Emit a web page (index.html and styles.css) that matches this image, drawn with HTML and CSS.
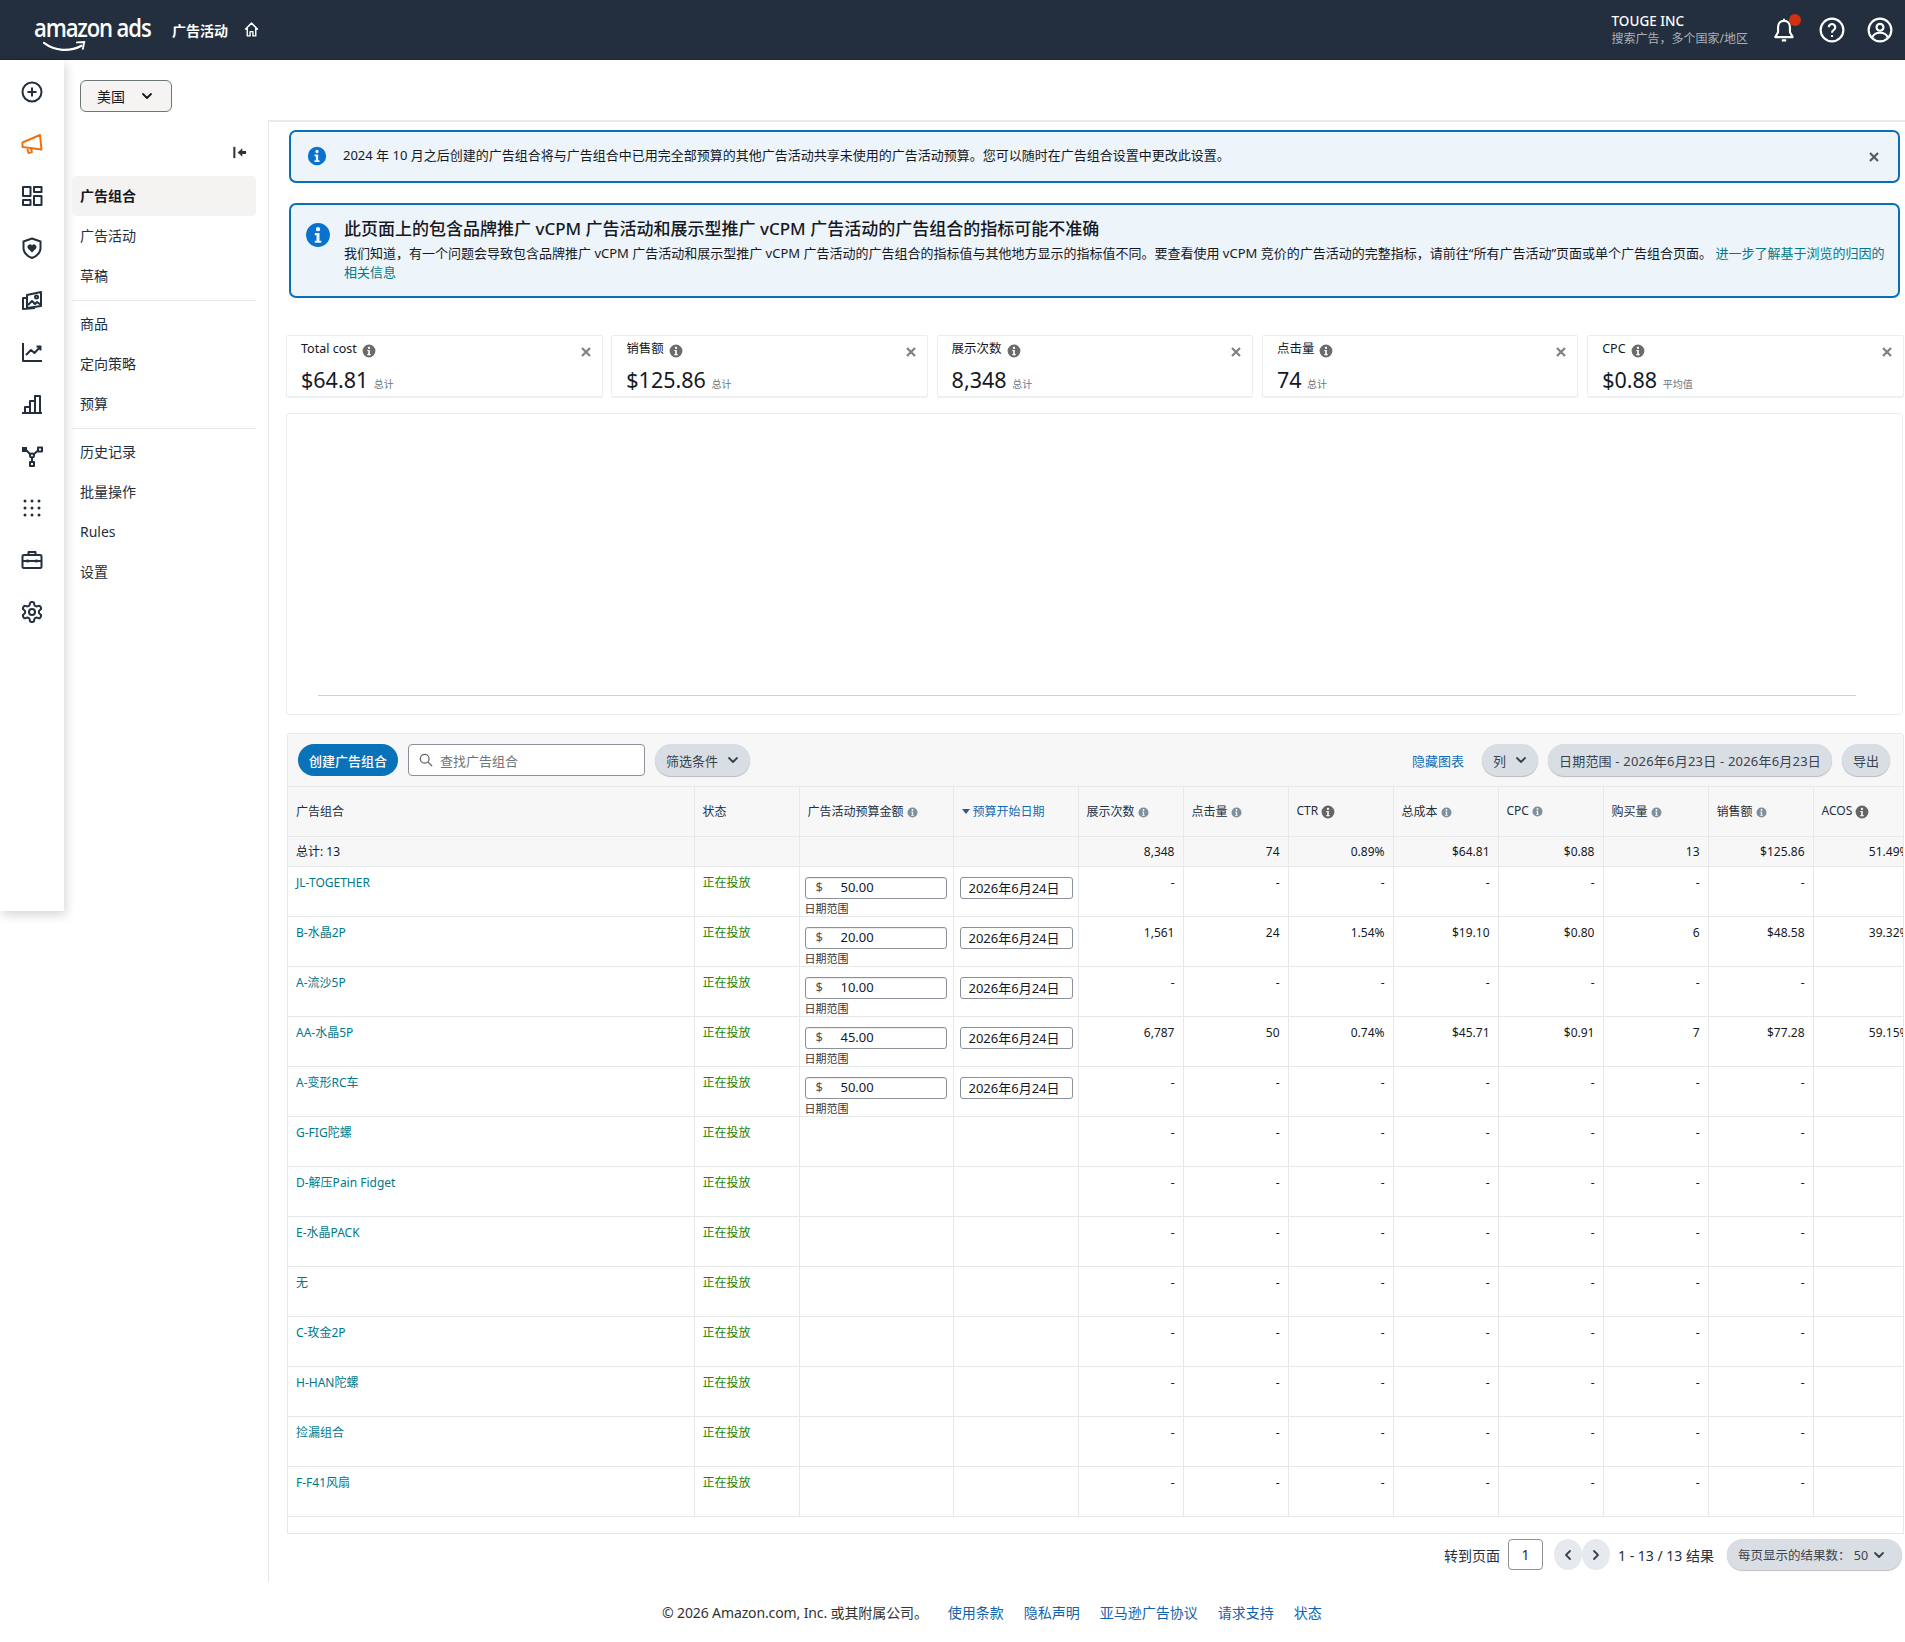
FILE: index.html
```html
<!DOCTYPE html>
<html lang="zh-CN">
<head>
  <meta charset="UTF-8">
  <meta name="viewport" content="width=device-width, initial-scale=1.0">
  <title>广告活动 - amazon ads</title>
  <link rel="stylesheet" href="styles.css">
</head>
<body>
  <!-- shared icons -->
  <svg class="defs" width="0" height="0">
    <symbol id="info" viewBox="0 0 24 24">
      <path fill-rule="evenodd" fill="currentColor" d="M12 1a11 11 0 1 1 0 22 11 11 0 0 1 0-22zm0 3.6a2 2 0 1 0 0 4 2 2 0 0 0 0-4zM9 10.2v2h1.6v5H9v2h6v-2h-1.6v-7z"/>
    </symbol>
    <symbol id="chev" viewBox="0 0 12 12">
      <path d="M2 4l4 4 4-4" fill="none" stroke="currentColor" stroke-width="1.8" stroke-linecap="round" stroke-linejoin="round"/>
    </symbol>
    <symbol id="cross" viewBox="0 0 12 12">
      <path d="M2 2l8 8M10 2l-8 8" fill="none" stroke="currentColor" stroke-width="2.2"/>
    </symbol>
  </svg>

  <header class="topbar">
    <div class="logo">
      <span class="logo-text">amazon ads</span>
      <svg class="logo-smile" viewBox="0 0 48 14" width="44" height="13">
        <path d="M1 2c12 9 28 10 41 3" fill="none" stroke="#fff" stroke-width="2.4" stroke-linecap="round"/>
        <path d="M37 1.500l8-.5-1.500 7.500" fill="none" stroke="#fff" stroke-width="2" stroke-linecap="round"/>
      </svg>
    </div>
    <span class="topbar-title">广告活动</span>
    <svg class="topbar-home" viewBox="0 0 24 24" width="17" height="17"><path d="M3 12l9-9 9 9M6 10v11h4v-6h4v6h4V10" fill="none" stroke="#fff" stroke-width="2" stroke-linejoin="round"/></svg>
    <div class="account">
      <div class="account-name">TOUGE INC</div>
      <div class="account-sub">搜索广告，多个国家/地区</div>
    </div>
    <div class="bell">
      <svg viewBox="0 0 24 24" width="26" height="26"><path d="M12 3.500c-3.600 0-5.500 2.700-5.500 6v4.500L4 18.500h16L17.500 14V9.500c0-3.300-1.900-6-5.500-6zM12 1.500v2M10 21.500h4" fill="none" stroke="#fff" stroke-width="2" stroke-linejoin="round"/></svg>
      <span class="bell-dot"></span>
    </div>
    <svg class="top-icon" viewBox="0 0 24 24" width="26" height="26"><circle cx="12" cy="12" r="10.500" fill="none" stroke="#fff" stroke-width="2"/><path d="M9 9.500a3 3 0 1 1 4.500 2.600c-1 .6-1.500 1.100-1.500 2.400M12 16.600v1.800" fill="none" stroke="#fff" stroke-width="2"/></svg>
    <svg class="top-icon" viewBox="0 0 24 24" width="26" height="26"><circle cx="12" cy="12" r="10.500" fill="none" stroke="#fff" stroke-width="2"/><circle cx="12" cy="9.500" r="3.200" fill="none" stroke="#fff" stroke-width="2"/><path d="M4.800 19c1-3 3.700-4.500 7.200-4.500s6.200 1.500 7.200 4.500" fill="none" stroke="#fff" stroke-width="2"/></svg>
  </header>

  <div class="layout">
    <!-- icon rail -->
    <aside class="rail">
      <svg viewBox="0 0 24 24"><circle cx="12" cy="12" r="9.500"/><path d="M12 7.500v9M7.500 12h9"/></svg>
      <svg class="rail-active" viewBox="0 0 24 24"><path d="M2.500 10.500L20 3l1.500 14.500-19-2.500zM7 15.500l1.500 5.500 3.500-1-1.500-4"/></svg>
      <svg viewBox="0 0 24 24"><rect x="3" y="3" width="7.500" height="9"/><rect x="14" y="3" width="7.500" height="5"/><rect x="3" y="16" width="7.500" height="5"/><rect x="14" y="12" width="7.500" height="9"/></svg>
      <svg viewBox="0 0 24 24"><path d="M12 2.500l8.500 3v6.500c0 5-3.500 8-8.500 10-5-2-8.500-5-8.500-10V5.500z"/><path class="solid" d="M12 16.500l-4-4a2.500 2.500 0 0 1 4-3 2.500 2.500 0 0 1 4 3z"/></svg>
      <svg viewBox="0 0 24 24"><path d="M7 7l14-3v14l-14 2zM7 10H3v11l12-1"/><circle cx="16.500" cy="9" r="1.500"/><path d="M8 17l4-4 3 3 2-2 4 3"/></svg>
      <svg viewBox="0 0 24 24"><path d="M3 3v18h19M6 15l5-5 3.500 3 6-6.500M16.500 6.500h4v4"/></svg>
      <svg viewBox="0 0 24 24"><path d="M2 21h20M5 21v-6h5v6M10 21V9h5v12M15 21V4h5v17"/></svg>
      <svg viewBox="0 0 24 24"><rect class="solid" x="2" y="3" width="5" height="5"/><rect x="18" y="3.500" width="4" height="4"/><rect x="10" y="18" width="4" height="4"/><circle cx="12" cy="11.500" r="2"/><path d="M6.500 6.500l4 4M18 6.500l-4.500 4M12 13.500V18"/></svg>
      <svg class="rail-dots" viewBox="0 0 24 24"><circle cx="5" cy="5" r="1.500"/><circle cx="12" cy="5" r="1.500"/><circle cx="19" cy="5" r="1.500"/><circle cx="5" cy="12" r="1.500"/><circle cx="12" cy="12" r="1.500"/><circle cx="19" cy="12" r="1.500"/><circle cx="5" cy="19" r="1.500"/><circle cx="12" cy="19" r="1.500"/><circle cx="19" cy="19" r="1.500"/></svg>
      <svg viewBox="0 0 24 24"><rect x="2.500" y="7" width="19" height="13" rx="1.500"/><path d="M8.500 7V4h7v3M2.500 13h19M7.500 11.500v3M16.500 11.500v3"/></svg>
      <svg viewBox="0 0 24 24"><path d="M12.220 2h-.44a2 2 0 0 0-2 2v.18a2 2 0 0 1-1 1.730l-.43.250a2 2 0 0 1-2 0l-.15-.08a2 2 0 0 0-2.730.730l-.22.380a2 2 0 0 0 .730 2.730l.15.100a2 2 0 0 1 1 1.720v.510a2 2 0 0 1-1 1.740l-.15.090a2 2 0 0 0-.730 2.730l.22.380a2 2 0 0 0 2.730.730l.15-.08a2 2 0 0 1 2 0l.43.250a2 2 0 0 1 1 1.730V20a2 2 0 0 0 2 2h.44a2 2 0 0 0 2-2v-.18a2 2 0 0 1 1-1.730l.43-.25a2 2 0 0 1 2 0l.15.08a2 2 0 0 0 2.730-.730l.22-.39a2 2 0 0 0-.730-2.730l-.15-.08a2 2 0 0 1-1-1.740v-.5a2 2 0 0 1 1-1.740l.15-.09a2 2 0 0 0 .730-2.730l-.22-.38a2 2 0 0 0-2.730-.730l-.15.08a2 2 0 0 1-2 0l-.43-.25a2 2 0 0 1-1-1.730V4a2 2 0 0 0-2-2z"/><circle cx="12" cy="12" r="3"/></svg>
    </aside>

    <div class="workspace">
      <div class="country-bar">
        <button class="country">美国 <svg width="12" height="12"><use href="#chev"/></svg></button>
      </div>

      <div class="work-body">
        <nav class="sidenav">
          <div class="collapse">
            <svg viewBox="0 0 16 16" width="15" height="15"><path d="M2.500 2v12" stroke="#333" stroke-width="2.200"/><path d="M6 8l5-4.500v3h4v3h-4v3z" fill="#333"/></svg>
          </div>
          <a class="nav-item nav-active" href="#">广告组合</a>
          <a class="nav-item" href="#">广告活动</a>
          <a class="nav-item" href="#">草稿</a>
          <div class="nav-line"></div>
          <a class="nav-item" href="#">商品</a>
          <a class="nav-item" href="#">定向策略</a>
          <a class="nav-item" href="#">预算</a>
          <div class="nav-line"></div>
          <a class="nav-item" href="#">历史记录</a>
          <a class="nav-item" href="#">批量操作</a>
          <a class="nav-item" href="#">Rules</a>
          <a class="nav-item" href="#">设置</a>
        </nav>

        <main class="content">
          <div class="alert alert-small">
            <svg class="alert-icon" width="20" height="20"><use href="#info"/></svg>
            <p>2024 年 10 月之后创建的广告组合将与广告组合中已用完全部预算的其他广告活动共享未使用的广告活动预算。您可以随时在广告组合设置中更改此设置。</p>
            <svg class="alert-close" width="12" height="12"><use href="#cross"/></svg>
          </div>
          <div class="alert alert-big">
            <svg class="alert-icon" width="26" height="26"><use href="#info"/></svg>
            <div>
              <h2>此页面上的包含品牌推广 vCPM 广告活动和展示型推广 vCPM 广告活动的广告组合的指标可能不准确</h2>
              <p>我们知道，有一个问题会导致包含品牌推广 vCPM 广告活动和展示型推广 vCPM 广告活动的广告组合的指标值与其他地方显示的指标值不同。要查看使用 vCPM 竞价的广告活动的完整指标，请前往“所有广告活动”页面或单个广告组合页面。 <a href="#">进一步了解基于浏览的归因的相关信息</a></p>
            </div>
          </div>

          <div class="metrics">
            <div class="metric">
              <div class="metric-label">Total cost <svg width="14" height="14"><use href="#info"/></svg></div>
              <div class="metric-value">$64.81 <small>总计</small></div>
              <svg class="metric-close" width="12" height="12"><use href="#cross"/></svg>
            </div>
            <div class="metric">
              <div class="metric-label">销售额 <svg width="14" height="14"><use href="#info"/></svg></div>
              <div class="metric-value">$125.86 <small>总计</small></div>
              <svg class="metric-close" width="12" height="12"><use href="#cross"/></svg>
            </div>
            <div class="metric">
              <div class="metric-label">展示次数 <svg width="14" height="14"><use href="#info"/></svg></div>
              <div class="metric-value">8,348 <small>总计</small></div>
              <svg class="metric-close" width="12" height="12"><use href="#cross"/></svg>
            </div>
            <div class="metric">
              <div class="metric-label">点击量 <svg width="14" height="14"><use href="#info"/></svg></div>
              <div class="metric-value">74 <small>总计</small></div>
              <svg class="metric-close" width="12" height="12"><use href="#cross"/></svg>
            </div>
            <div class="metric">
              <div class="metric-label">CPC <svg width="14" height="14"><use href="#info"/></svg></div>
              <div class="metric-value">$0.88 <small>平均值</small></div>
              <svg class="metric-close" width="12" height="12"><use href="#cross"/></svg>
            </div>
          </div>

          <div class="chart"><div class="chart-axis"></div></div>

          <section class="panel">
            <div class="toolbar">
              <button class="btn-primary">创建广告组合</button>
              <div class="search">
                <svg viewBox="0 0 16 16" width="14" height="14"><circle cx="6.500" cy="6.500" r="5" fill="none" stroke="#666" stroke-width="1.500"/><path d="M10.500 10.500l4.500 4.500" stroke="#666" stroke-width="1.500"/></svg>
                <span>查找广告组合</span>
              </div>
              <button class="btn-gray">筛选条件 <svg width="12" height="12"><use href="#chev"/></svg></button>
              <a class="hide-chart" href="#">隐藏图表</a>
              <button class="btn-gray">列 <svg width="12" height="12"><use href="#chev"/></svg></button>
              <button class="btn-gray btn-range">日期范围 - 2026年6月23日 - 2026年6月23日</button>
              <button class="btn-gray">导出</button>
            </div>

            <div class="table-clip">
              <table class="grid">
                <colgroup>
                  <col class="c-name"><col class="c-status"><col class="c-budget"><col class="c-date">
                  <col class="c-num"><col class="c-num"><col class="c-num"><col class="c-num">
                  <col class="c-num"><col class="c-num"><col class="c-num"><col class="c-num">
                </colgroup>
                <thead>
                  <tr>
                    <th>广告组合</th>
                    <th>状态</th>
                    <th>广告活动预算金额 <svg class="i-soft" width="11" height="11"><use href="#info"/></svg></th>
                    <th class="sorted"><span class="sort-mark"></span>预算开始日期</th>
                    <th>展示次数 <svg class="i-soft" width="11" height="11"><use href="#info"/></svg></th>
                    <th>点击量 <svg class="i-soft" width="11" height="11"><use href="#info"/></svg></th>
                    <th>CTR <svg class="i-hard" width="14" height="14"><use href="#info"/></svg></th>
                    <th>总成本 <svg class="i-soft" width="11" height="11"><use href="#info"/></svg></th>
                    <th>CPC <svg class="i-soft" width="11" height="11"><use href="#info"/></svg></th>
                    <th>购买量 <svg class="i-soft" width="11" height="11"><use href="#info"/></svg></th>
                    <th>销售额 <svg class="i-soft" width="11" height="11"><use href="#info"/></svg></th>
                    <th>ACOS <svg class="i-hard" width="14" height="14"><use href="#info"/></svg></th>
                  </tr>
                </thead>
                <tbody>
                  <tr class="total">
                    <td>总计: 13</td><td></td><td></td><td></td>
                    <td>8,348</td><td>74</td><td>0.89%</td><td>$64.81</td><td>$0.88</td><td>13</td><td>$125.86</td><td>51.49%</td>
                  </tr>
                  <tr>
                    <td><a href="#">JL-TOGETHER</a></td><td class="live">正在投放</td>
                    <td class="cell-budget"><div class="money"><span>$</span>50.00</div><div class="range-label">日期范围</div></td>
                    <td class="cell-date"><div class="date-box">2026年6月24日</div></td>
                    <td>-</td><td>-</td><td>-</td><td>-</td><td>-</td><td>-</td><td>-</td><td></td>
                  </tr>
                  <tr>
                    <td><a href="#">B-水晶2P</a></td><td class="live">正在投放</td>
                    <td class="cell-budget"><div class="money"><span>$</span>20.00</div><div class="range-label">日期范围</div></td>
                    <td class="cell-date"><div class="date-box">2026年6月24日</div></td>
                    <td>1,561</td><td>24</td><td>1.54%</td><td>$19.10</td><td>$0.80</td><td>6</td><td>$48.58</td><td>39.32%</td>
                  </tr>
                  <tr>
                    <td><a href="#">A-流沙5P</a></td><td class="live">正在投放</td>
                    <td class="cell-budget"><div class="money"><span>$</span>10.00</div><div class="range-label">日期范围</div></td>
                    <td class="cell-date"><div class="date-box">2026年6月24日</div></td>
                    <td>-</td><td>-</td><td>-</td><td>-</td><td>-</td><td>-</td><td>-</td><td></td>
                  </tr>
                  <tr>
                    <td><a href="#">AA-水晶5P</a></td><td class="live">正在投放</td>
                    <td class="cell-budget"><div class="money"><span>$</span>45.00</div><div class="range-label">日期范围</div></td>
                    <td class="cell-date"><div class="date-box">2026年6月24日</div></td>
                    <td>6,787</td><td>50</td><td>0.74%</td><td>$45.71</td><td>$0.91</td><td>7</td><td>$77.28</td><td>59.15%</td>
                  </tr>
                  <tr>
                    <td><a href="#">A-变形RC车</a></td><td class="live">正在投放</td>
                    <td class="cell-budget"><div class="money"><span>$</span>50.00</div><div class="range-label">日期范围</div></td>
                    <td class="cell-date"><div class="date-box">2026年6月24日</div></td>
                    <td>-</td><td>-</td><td>-</td><td>-</td><td>-</td><td>-</td><td>-</td><td></td>
                  </tr>
                  <tr><td><a href="#">G-FIG陀螺</a></td><td class="live">正在投放</td><td></td><td></td><td>-</td><td>-</td><td>-</td><td>-</td><td>-</td><td>-</td><td>-</td><td></td></tr>
                  <tr><td><a href="#">D-解压Pain Fidget</a></td><td class="live">正在投放</td><td></td><td></td><td>-</td><td>-</td><td>-</td><td>-</td><td>-</td><td>-</td><td>-</td><td></td></tr>
                  <tr><td><a href="#">E-水晶PACK</a></td><td class="live">正在投放</td><td></td><td></td><td>-</td><td>-</td><td>-</td><td>-</td><td>-</td><td>-</td><td>-</td><td></td></tr>
                  <tr><td><a href="#">无</a></td><td class="live">正在投放</td><td></td><td></td><td>-</td><td>-</td><td>-</td><td>-</td><td>-</td><td>-</td><td>-</td><td></td></tr>
                  <tr><td><a href="#">C-玫金2P</a></td><td class="live">正在投放</td><td></td><td></td><td>-</td><td>-</td><td>-</td><td>-</td><td>-</td><td>-</td><td>-</td><td></td></tr>
                  <tr><td><a href="#">H-HAN陀螺</a></td><td class="live">正在投放</td><td></td><td></td><td>-</td><td>-</td><td>-</td><td>-</td><td>-</td><td>-</td><td>-</td><td></td></tr>
                  <tr><td><a href="#">捡漏组合</a></td><td class="live">正在投放</td><td></td><td></td><td>-</td><td>-</td><td>-</td><td>-</td><td>-</td><td>-</td><td>-</td><td></td></tr>
                  <tr><td><a href="#">F-F41风扇</a></td><td class="live">正在投放</td><td></td><td></td><td>-</td><td>-</td><td>-</td><td>-</td><td>-</td><td>-</td><td>-</td><td></td></tr>
                </tbody>
              </table>
            </div>
          </section>

          <div class="pager">
            <span>转到页面</span>
            <div class="page-input">1</div>
            <div class="page-arrows">
              <button class="page-arrow"><svg width="12" height="12"><use class="flip-l" href="#chev"/></svg></button>
              <button class="page-arrow"><svg width="12" height="12"><use class="flip-r" href="#chev"/></svg></button>
            </div>
            <span class="page-count">1 - 13 / 13 结果</span>
            <button class="btn-gray page-size">每页显示的结果数： 50 <svg width="12" height="12"><use href="#chev"/></svg></button>
          </div>
        </main>
      </div>

      <footer class="foot">
        <span>© 2026 Amazon.com, Inc. 或其附属公司。</span>
        <a href="#">使用条款</a>
        <a href="#">隐私声明</a>
        <a href="#">亚马逊广告协议</a>
        <a href="#">请求支持</a>
        <a href="#">状态</a>
      </footer>
    </div>
  </div>
</body>
</html>
```

FILE: styles.css
```css
/* base */
* {
  box-sizing: border-box;
}
body {
  margin: 0;
  background: #fff;
  color: #16191f;
  font-family: "Noto Sans", "Noto Sans CJK SC", sans-serif;
  font-size: 13px;
}
a {
  text-decoration: none;
}
button {
  font-family: inherit;
  border: none;
}
.defs {
  position: absolute;
}

/* top bar */
.topbar {
  height: 60px;
  background: #232f3e;
  color: #fff;
  display: flex;
  align-items: center;
  padding: 0 12px 0 34px;
  border-bottom: 1px solid #1d2734;
}
.logo {
  position: relative;
  width: 116px;
  height: 46px;
  margin-right: 22px;
}
.logo-text {
  display: block;
  font-family: "Open Sans", sans-serif;
  font-weight: 600;
  font-size: 25px;
  line-height: 34px;
  margin-top: 3px;
  letter-spacing: -1.3px;
  white-space: nowrap;
  transform: scaleX(0.885);
  transform-origin: left center;
}
.logo-smile {
  position: absolute;
  left: 9px;
  top: 34px;
}
.topbar-title {
  font-size: 14px;
  font-weight: 700;
}
.topbar-home {
  margin-left: 15px;
}
.account {
  margin-left: auto;
  margin-right: 23px;
  line-height: 17px;
  padding-top: 1px;
}
.account-name {
  font-size: 13.500px;
  font-weight: 500;
}
.account-sub {
  font-size: 12px;
  color: #a9b2bc;
}
.bell {
  position: relative;
  width: 26px;
  height: 26px;
  margin-right: 22px;
}
.bell-dot {
  position: absolute;
  right: -4px;
  top: -3px;
  width: 12px;
  height: 12px;
  border-radius: 50%;
  background: #d13212;
}
.top-icon + .top-icon {
  margin-left: 22px;
}

/* main layout */
.layout {
  display: flex;
  align-items: flex-start;
}
.rail {
  width: 64px;
  height: 851px;
  flex: none;
  display: flex;
  flex-direction: column;
  align-items: center;
  gap: 28px;
  padding-top: 20px;
  box-shadow: 2px 4px 10px rgba(0, 0, 0, 0.16);
  background: #fff;
}
.rail svg {
  width: 24px;
  height: 24px;
  fill: none;
  stroke: #232f3e;
  stroke-width: 2;
  stroke-linejoin: round;
}
.rail .rail-active {
  stroke: #ec7211;
}
.rail .solid {
  fill: #232f3e;
  stroke: none;
}
.rail .rail-dots {
  fill: #232f3e;
  stroke: none;
}
.workspace {
  flex: 1;
  min-width: 0;
}
.country-bar {
  height: 60px;
  padding: 20px 0 0 16px;
}
.country {
  width: 92px;
  height: 32px;
  background: #f5f4f2;
  border: 1px solid #6c7778;
  border-radius: 6px;
  font-size: 14px;
  color: #16191f;
  display: flex;
  align-items: center;
  gap: 16px;
  padding-left: 16px;
}
.work-body {
  display: flex;
  align-items: stretch;
}

/* second nav */
.sidenav {
  width: 204px;
  flex: none;
  padding: 0 12px 0 8px;
}
.collapse {
  height: 56px;
  display: flex;
  align-items: center;
  justify-content: flex-end;
  padding-right: 9px;
  padding-top: 8px;
}
.nav-item {
  display: block;
  height: 40px;
  line-height: 40px;
  padding-left: 8px;
  font-size: 14px;
  color: #232f3e;
  border-radius: 4px;
}
.nav-active {
  background: #f5f3f1;
  font-weight: 700;
  color: #16191f;
}
.nav-line {
  height: 1px;
  background: #e6e7e8;
  margin: 4px 0 3px;
}

/* content */
.content {
  flex: 1;
  min-width: 0;
  height: 1462px;
  border-top: 2px solid #e9ebed;
  border-left: 1px solid #e3e5e7;
  padding: 8px 0 0 20px;
}
.alert {
  display: flex;
  width: 1611px;
  background: #edf4fa;
  border: 2px solid #0a6fb5;
  border-radius: 7px;
  position: relative;
}
.alert-icon {
  color: #0972ce;
  flex: none;
}
.alert p {
  margin: 0;
  font-size: 13px;
  line-height: 19px;
}
.alert-small {
  height: 53px;
  align-items: center;
  padding-left: 16px;
  padding-bottom: 2px;
  margin-bottom: 20px;
}
.alert-small p {
  margin-left: 16px;
}
.alert-close {
  position: absolute;
  right: 18px;
  top: 19px;
  color: #545b64;
}
.alert-big {
  height: 95px;
  padding: 13px 8px 0 14px;
}
.alert-big .alert-icon {
  margin: 4px 13px 0 0;
}
.alert h2 {
  margin: 0 0 4px;
  font-size: 17px;
  font-weight: 500;
  line-height: 22px;
}
.alert a {
  color: #00798a;
}

/* metric cards */
.metrics {
  display: grid;
  grid-template-columns: repeat(5, 316.500px);
  gap: 8.800px;
  margin: 37px 0 16px -3px;
}
.metric {
  position: relative;
  height: 62px;
  padding: 3px 14px;
  border: 1px solid #ebedee;
  border-radius: 2px;
  box-shadow: 0 1px 1px rgba(0, 0, 0, 0.06);
}
.metric-label {
  font-size: 12.500px;
  line-height: 20px;
  display: flex;
  align-items: center;
  gap: 5px;
}
.metric-label svg {
  color: #6b6b6b;
  margin-top: 3px;
}
.metric-value {
  font-size: 21.500px;
  line-height: 30px;
  margin-top: 6px;
}
.metric-value small {
  font-size: 10px;
  color: #6b7580;
}
.metric-close {
  position: absolute;
  right: 10px;
  top: 10px;
  color: #808080;
}

/* chart placeholder */
.chart {
  width: 1617px;
  height: 302px;
  margin: 0 0 18px -3px;
  padding: 281px 46px 0 31px;
  border: 1px solid #ebedee;
  border-radius: 3px;
}
.chart-axis {
  height: 1px;
  background: #c5d5dc;
}

/* table panel */
.panel {
  width: 1617px;
  margin-left: -2px;
  border: 1px solid #e6e8e9;
  border-radius: 3px 3px 0 0;
  overflow: hidden;
  padding-bottom: 16px;
}
.toolbar {
  height: 52px;
  background: #f7f7f7;
  display: flex;
  align-items: center;
  gap: 10px;
  padding: 0 13px 0 10px;
}
.btn-primary {
  height: 32px;
  width: 100px;
  background: #0a72b9;
  color: #fff;
  font-size: 13px;
  border-radius: 16px;
  font-weight: 500;
  padding: 0;
}
.search {
  width: 237px;
  height: 32px;
  display: flex;
  align-items: center;
  gap: 7px;
  padding-left: 10px;
  background: #fff;
  border: 1px solid #8a9199;
  border-radius: 4px;
  color: #6c7778;
}
.btn-gray {
  height: 32px;
  padding: 0 11px;
  background: #d9dee4;
  color: #39424e;
  font-size: 13px;
  border-radius: 16px;
  display: inline-flex;
  align-items: center;
  gap: 9px;
  white-space: nowrap;
  box-shadow: 0 1px 1px rgba(0, 0, 0, 0.25);
}
.btn-range {
  letter-spacing: 0.2px;
}
.hide-chart {
  margin-left: auto;
  margin-right: 8px;
  color: #0f6cb6;
  font-size: 13px;
}
.table-clip {
  overflow: hidden;
}
.grid {
  width: 1630px;
  table-layout: fixed;
  border-collapse: collapse;
  font-size: 12px;
}
.c-name { width: 406px; }
.c-status { width: 105px; }
.c-budget { width: 154px; }
.c-date { width: 125px; }
.c-num { width: 105px; }
.grid th,
.grid td {
  border: 1px solid #e6e8e9;
  border-left-width: 1px;
  padding: 0 8px;
  overflow: hidden;
  white-space: nowrap;
}
.grid tr > :first-child {
  border-left: none;
}
.grid th {
  height: 50px;
  padding-bottom: 2px;
  background: #f7f7f7;
  font-weight: 400;
  text-align: left;
  color: #232f3e;
}
.grid th svg {
  vertical-align: -2px;
}
.i-soft {
  color: #7e909e;
}
.i-hard {
  color: #666;
  vertical-align: -4px !important;
}
.sorted {
  color: #0f6cb6 !important;
}
.sort-mark {
  display: inline-block;
  border: 4px solid transparent;
  border-top: 5px solid #2a5d8a;
  border-bottom: none;
  margin-right: 3px;
  vertical-align: 2px;
}
.grid td {
  height: 50px;
  vertical-align: top;
  padding-top: 7px;
  line-height: 18px;
  text-align: right;
}
.grid td:nth-child(-n+4) {
  text-align: left;
}
.grid .total td {
  height: 30px;
  padding-top: 6px;
  background: #f7f7f7;
}
.grid a {
  color: #00798a;
}
.grid .live {
  color: #1d8102;
}
.grid .cell-budget {
  padding: 10px 6px 0 5px;
}
.grid .cell-date {
  padding: 10px 5px 0 6px;
}
.money {
  height: 22px;
  border: 1px solid #8a9199;
  border-radius: 3px;
  font-size: 13px;
  line-height: 19px;
  padding-left: 10px;
  box-shadow: inset 0 1px 1px rgba(0, 0, 0, 0.08);
}
.money span {
  color: #555;
  display: inline-block;
  width: 25px;
}
.range-label {
  font-size: 11px;
  line-height: 14px;
  margin-top: 3px;
  color: #333;
}
.date-box {
  height: 22px;
  border: 1px solid #8a9199;
  border-radius: 3px;
  font-size: 13px;
  line-height: 21px;
  padding-left: 8px;
}

/* pager */
.pager {
  display: flex;
  align-items: center;
  justify-content: flex-end;
  gap: 8px;
  height: 31px;
  width: 1615px;
  margin: 5px 0 0 -2px;
  font-size: 14px;
  color: #232f3e;
}
.page-input {
  width: 35px;
  height: 31px;
  line-height: 29px;
  text-align: center;
  border: 1px solid #8a9199;
  border-radius: 4px;
}
.page-arrows {
  display: flex;
  margin: 0 0 0 3px;
}
.page-arrow {
  width: 28px;
  height: 31px;
  padding: 0;
  border-radius: 50%;
  background: #e6e9ed;
  display: flex;
  align-items: center;
  justify-content: center;
  color: #39424e;
}
.flip-l {
  transform: rotate(90deg);
  transform-origin: 6px 6px;
}
.flip-r {
  transform: rotate(-90deg);
  transform-origin: 6px 6px;
}
.page-count {
  margin-right: 5px;
}
.page-size {
  gap: 5px;
  height: 31px;
  width: 175px;
  font-size: 12.500px;
}

/* footer */
.foot {
  display: flex;
  align-items: center;
  gap: 20px;
  padding: 21px 0 0 598px;
  font-size: 14px;
  line-height: 20px;
  color: #333;
}
.foot span {
  letter-spacing: -0.12px;
}
.foot a {
  color: #0f62ae;
}
```
